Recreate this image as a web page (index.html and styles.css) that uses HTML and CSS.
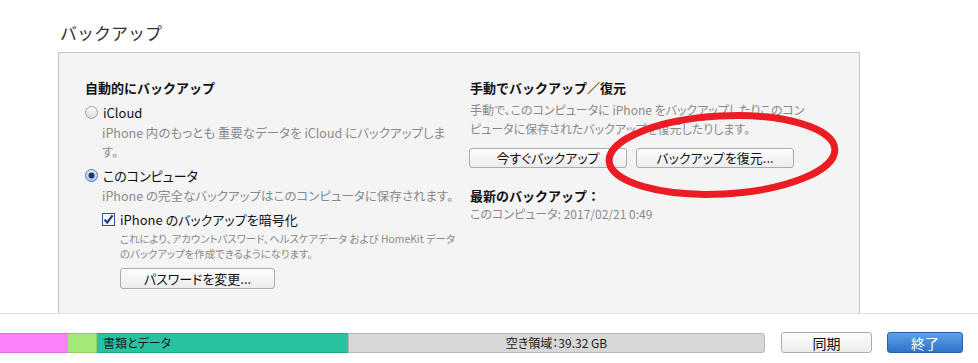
FILE: index.html
```html
<!DOCTYPE html>
<html lang="ja">
<head>
    <meta charset="UTF-8">
    <meta name="viewport" content="width=device-width, initial-scale=1.0">
    <title>バックアップ</title>
    <link rel="stylesheet" href="styles.css">
</head>
<body>

<div id="window">
    <h2 class="title">バックアップ</h2>

    <div class="panel">
        <div class="col left">
            <h3>自動的にバックアップ</h3>

            <div class="option">
                <svg class="radio" width="13" height="13" viewBox="0 0 13 13">
                    <defs>
                        <linearGradient id="rg" x1="0" y1="0" x2="0" y2="1">
                            <stop offset="0" stop-color="#ffffff"/>
                            <stop offset="1" stop-color="#d9d9d9"/>
                        </linearGradient>
                    </defs>
                    <circle cx="6.5" cy="6.5" r="6" fill="url(#rg)" stroke="#9d9d9d"/>
                </svg>
                <span>iCloud</span>
            </div>
            <p class="desc">iPhone 内のもっとも 重要なデータを iCloud にバックアップしま<br>す。</p>

            <div class="option second">
                <svg class="radio" width="13" height="13" viewBox="0 0 13 13">
                    <defs>
                        <linearGradient id="rb" x1="0" y1="0" x2="0" y2="1">
                            <stop offset="0" stop-color="#e3eefb"/>
                            <stop offset="1" stop-color="#a9c7ec"/>
                        </linearGradient>
                    </defs>
                    <circle cx="6.5" cy="6.5" r="6" fill="url(#rb)" stroke="#4f78ad"/>
                    <circle cx="6.5" cy="6.5" r="3" fill="#1d3a66"/>
                </svg>
                <span>このコンピュータ</span>
            </div>
            <p class="desc">iPhone の完全なバックアップはこのコンピュータに保存されます。</p>

            <div class="sub">
                <div class="check">
                    <svg width="13" height="13" viewBox="0 0 13 13">
                        <rect x="0.5" y="0.5" width="12" height="12" fill="#f2f6fb" stroke="#33548a"/>
                        <path d="M2.6 6.6 L5.2 9.6 L10.6 2.4" fill="none" stroke="#1f3c6e" stroke-width="2.2"/>
                    </svg>
                    <span>iPhone のバックアップを暗号化</span>
                </div>
                <p class="small">これにより、アカウントパスワード、ヘルスケアデータ および HomeKit データ<br>のバックアップを作成できるようになります。</p>
                <button class="btn pw">パスワードを変更...</button>
            </div>
        </div>

        <div class="col right">
            <h3>手動でバックアップ／復元</h3>
            <p class="desc">手動で、このコンピュータに iPhone をバックアップしたりこのコン<br>ピュータに保存されたバックアップを復元したりします。</p>
            <div class="btn-row">
                <button class="btn now">今すぐバックアップ</button>
                <button class="btn restore">バックアップを復元...</button>
            </div>
            <h3 class="latest">最新のバックアップ：</h3>
            <p class="desc date">このコンピュータ: 2017/02/21 0:49</p>
        </div>
    </div>

    <div class="footer">
        <div class="usage">
            <div class="seg apps"></div>
            <div class="seg other"></div>
            <div class="seg docs">書類とデータ</div>
            <div class="seg free">空き領域：39.32 GB</div>
        </div>
        <button class="btn sync">同期</button>
        <button class="btn done">終了</button>
    </div>

    <!-- red mark drawn over the screenshot -->
    <svg class="mark" width="250" height="100" viewBox="0 0 250 100">
        <ellipse cx="122" cy="47" rx="113" ry="39" fill="none" stroke="#ec1c24" stroke-width="7" transform="rotate(-3 122 47)"/>
    </svg>
</div>

</body>
</html>
```

FILE: styles.css
```css
body {
    margin: 0;
    background: #ffffff;
    font-family: "Noto Sans CJK JP", "Noto Sans", sans-serif;
    font-feature-settings: "palt";
    color: #111;
}
#window {
    position: relative;
    width: 978px;
    height: 363px;
    overflow: hidden;
}
.title {
    margin: 0;
    height: 52px;
    padding: 0 0 0 60px;
    font-size: 17px;
    font-weight: 400;
    font-feature-settings: normal;
    line-height: 66px;
    color: #333;
    box-sizing: border-box;
}
.panel {
    display: flex;
    margin-left: 58px;
    width: 802px;
    height: 261px;
    box-sizing: border-box;
    border: 1px solid #c6c6c6;
    border-bottom: none;
    background: #f4f4f4;
    padding: 26px 0 0 26px;
}
.col h3 {
    margin: 0;
    font-size: 13px;
    font-weight: 700;
    font-feature-settings: normal;
    line-height: 18px;
    color: #111;
}
.left {
    width: 385px;
}
.right {
    width: 380px;
}
.option {
    display: flex;
    align-items: center;
    gap: 5px;
    margin-top: 6px;
    font-size: 13px;
    line-height: 19px;
}
.option.second {
    margin-top: 5px;
}
.desc {
    margin: 1px 0 0 17px;
    font-size: 12.5px;
    line-height: 19px;
    color: #8a8a8a;
    white-space: nowrap;
}
.right .desc {
    margin-left: 0;
    margin-top: 3px;
    font-size: 12px;
}
.sub {
    margin-left: 17px;
}
.check {
    display: flex;
    align-items: center;
    gap: 5px;
    margin-top: 5px;
    font-size: 13px;
    line-height: 19px;
}
.small {
    margin: 2px 0 0 18px;
    font-size: 10.4px;
    line-height: 15px;
    color: #8a8a8a;
    white-space: nowrap;
}
.btn {
    font-family: inherit;
    font-feature-settings: "palt";
    font-size: 13px;
    color: #111;
    height: 20px;
    padding: 0;
    border: 1px solid #acacac;
    border-radius: 3px;
    background: linear-gradient(#fdfdfd, #ececec);
    line-height: 18px;
    cursor: pointer;
}
.pw {
    margin: 7px 0 0 18px;
    width: 155px;
    height: 21px;
}
.btn-row {
    display: flex;
    gap: 9px;
    margin-top: 10px;
    margin-left: -1px;
}
.now, .restore {
    width: 158px;
}
.latest {
    margin-top: 19px !important;
}
.right .date {
    margin-top: 0;
    line-height: 18px;
}
.footer {
    display: flex;
    align-items: center;
    border-top: 1px solid #e2e2e2;
    padding-top: 18px;
}
.usage {
    display: flex;
    width: 765px;
    height: 20px;
}
.seg {
    height: 20px;
    box-sizing: border-box;
    font-size: 12px;
    line-height: 18px;
    color: #1a1a1a;
}
.apps {
    width: 68px;
    background: #fb80fb;
    border-top: 1px solid #e06ee0;
    border-bottom: 1px solid #e06ee0;
}
.other {
    width: 29px;
    background: #a4e87a;
    border: 1px solid #8fd066;
    border-left: none;
}
.docs {
    width: 251px;
    background: #27c3a1;
    border-top: 1px solid #1ea586;
    border-bottom: 1px solid #1ea586;
    padding-left: 6px;
}
.free {
    flex: 1;
    background: #d7d7d7;
    border: 1px solid #b7b7b7;
    border-radius: 0 3px 3px 0;
    text-align: center;
}
.sync {
    margin-left: 16px;
    width: 91px;
    height: 21px;
    font-size: 14px;
}
.done {
    margin-left: 15px;
    width: 76px;
    height: 21px;
    font-size: 14px;
    color: #fff;
    border-color: #2b5ea3;
    background: linear-gradient(#5ba2ea, #2f73c8);
}
.mark {
    position: absolute;
    left: 600px;
    top: 108px;
}
```
